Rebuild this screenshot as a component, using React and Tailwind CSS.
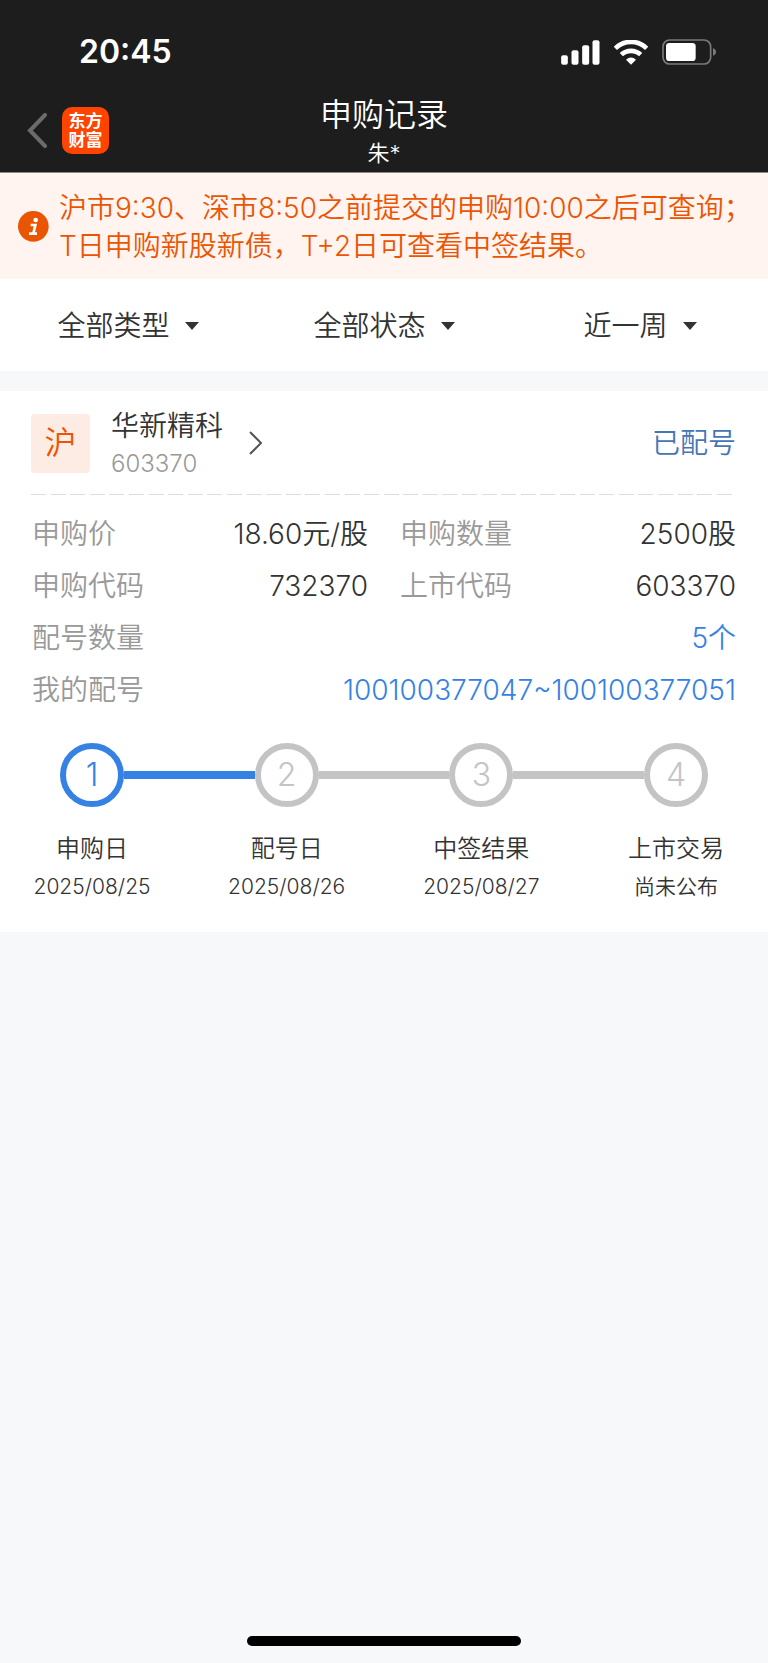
import React from "react";

const filters = [
  { id: "type", label: "类型", options: ["全部类型", "新股申购", "新债申购"] },
  { id: "status", label: "状态", options: ["全部状态", "尚未配号", "已经中签"] },
  { id: "period", label: "时间", options: ["近一周", "近一月", "近三月"] },
];

const details = [
  { label: "申购价", value: "18.60元/股" },
  { label: "申购数量", value: "2500股" },
  { label: "申购代码", value: "732370" },
  { label: "上市代码", value: "603370" },
  { label: "配号数量", value: "5个", wide: true },
  { label: "我的配号", value: "100100377047~100100377051", wide: true },
];

const steps = [
  { title: "申购日", date: "2025/08/25", done: true },
  { title: "配号日", date: "2025/08/26" },
  { title: "中签结果", date: "2025/08/27" },
  { title: "上市交易", date: "尚未公布" },
];

function SignalIcon() {
  return (
    <svg className="h-[25px] w-[39px]" viewBox="0 0 116 75" fill="#fff" aria-hidden="true">
      <rect x="0" y="46" width="20" height="28" rx="6" />
      <rect x="31" y="31" width="21" height="43" rx="6" />
      <rect x="63" y="16" width="21" height="58" rx="6" />
      <rect x="94" y="1" width="21" height="73" rx="6" />
    </svg>
  );
}

function WifiIcon() {
  return (
    <svg className="h-[25px] w-[34px]" viewBox="0 0 102 75" fill="none" aria-hidden="true">
      <path d="M4 25 A67 67 0 0 1 98 25" stroke="#fff" strokeWidth="14" />
      <path d="M22 44 A42 42 0 0 1 80 44" stroke="#fff" strokeWidth="14" />
      <path d="M51 74 L36 59 Q51 46 66 59 Z" fill="#fff" />
    </svg>
  );
}

function BatteryIcon() {
  return (
    <svg className="h-[26px] w-[54px]" viewBox="0 0 162 78" fill="none" aria-hidden="true">
      <rect x="3" y="3" width="143" height="72" rx="20" stroke="#7a7a7a" strokeWidth="5" />
      <rect x="12" y="12" width="89" height="54" rx="10" fill="#fff" />
      <path d="M153 28 Q162 31 162 39 Q162 47 153 50 Z" fill="#7a7a7a" />
    </svg>
  );
}

function InfoIcon() {
  return (
    <svg className="h-[31px] w-[31px] shrink-0" viewBox="0 0 93 93" aria-hidden="true">
      <circle cx="46" cy="46" r="46" fill="#ea5504" />
      <circle cx="53" cy="27" r="7" fill="#fff" />
      <path d="M38 42 H52 L46 68 M33 68 H57" fill="none" stroke="#fff" strokeWidth="8" />
    </svg>
  );
}

function Header() {
  return (
    <header className="border-b border-[#8a8a8a] bg-[#1d1d1d] text-white">
      <div className="flex h-[72px] items-end justify-between pr-[52px] pl-[79px]">
        <span className="text-[32px] leading-10 font-semibold">20:45</span>
        <div className="flex h-10 items-center gap-[14px]">
          <SignalIcon />
          <WifiIcon />
          <BatteryIcon />
        </div>
      </div>
      <div className="grid h-[100px] grid-cols-3">
        <div className="flex items-end gap-[15px] pb-[18px] pl-[27px]">
          <button type="button" aria-label="返回" className="flex h-[47px] items-center">
            <svg className="h-[35px] w-5" viewBox="0 0 20 35" fill="none">
              <path d="M18 2 L3 17.5 L18 33" stroke="#6b6b6b" strokeWidth="4" strokeLinecap="round" />
            </svg>
          </button>
          <a
            href="#home"
            className="flex h-[47px] w-[47px] flex-col items-center justify-center rounded-[10px] bg-[#ff4400] text-[17px] leading-[19px] font-bold"
          >
            <span>东方</span>
            <span>财富</span>
          </a>
        </div>
        <div className="flex flex-col items-center justify-end pb-[3px]">
          <h1 className="text-[32px] leading-[45px]">申购记录</h1>
          <p className="text-[22px] leading-8">朱*</p>
        </div>
      </div>
    </header>
  );
}

function Notice() {
  return (
    <section className="flex items-center gap-[10px] bg-[#fff4ef] pt-[15px] pb-[14px] pl-[18px] text-[#ea5504]">
      <InfoIcon />
      <p className="pt-px text-[28px] leading-[38px]">
        沪市9:30、深市8:50之前提交的申购10:00之后可查询；
        <br />
        T日申购新股新债，T+2日可查看中签结果。
      </p>
    </section>
  );
}

function Filters() {
  return (
    <form className="grid h-[92px] grid-cols-3 bg-white pt-0.5">
      {filters.map((filter) => (
        <label key={filter.id} htmlFor={filter.id} className="flex items-center justify-center gap-[14px]">
          <select
            id={filter.id}
            aria-label={filter.label}
            className="appearance-none bg-transparent text-[28px] leading-10 text-[#333]"
          >
            {filter.options.map((option) => (
              <option key={option}>{option}</option>
            ))}
          </select>
          <svg className="h-2 w-[14px]" viewBox="0 0 14 8" fill="#333" aria-hidden="true">
            <path d="M0 0 H14 L7 8 Z" />
          </svg>
        </label>
      ))}
    </form>
  );
}

function Stepper() {
  return (
    <div className="pt-[27px]">
      <div className="flex items-center px-[60px]">
        {steps.map((step, index) => (
          <React.Fragment key={step.title}>
            {index > 0 && (
              <div className={steps[index - 1].done ? "h-2 flex-1 bg-[#3582e4]" : "h-2 flex-1 bg-[#c4c4c4]"} />
            )}
            <div
              className={
                step.done
                  ? "flex h-16 w-16 items-center justify-center rounded-full border-[6px] border-[#3582e4] text-[32px] font-light text-[#3582e4]"
                  : "flex h-16 w-16 items-center justify-center rounded-full border-[6px] border-[#c4c4c4] text-[32px] font-light text-[#c4c4c4]"
              }
            >
              {index + 1}
            </div>
          </React.Fragment>
        ))}
      </div>
      <ol className="flex justify-between px-7 pt-6 text-center text-[#333]">
        {steps.map((step) => (
          <li key={step.title} className="w-32">
            <p className="text-[24px] leading-9">{step.title}</p>
            <p className="text-[21px] leading-10">{step.date}</p>
          </li>
        ))}
      </ol>
    </div>
  );
}

function RecordCard() {
  return (
    <article className="bg-white pb-[25px]">
      <div className="flex items-center pt-[14px] pr-8 pl-[31px]">
        <span className="flex h-[59px] w-[59px] items-center justify-center rounded bg-[#fdece4] text-[32px] text-[#ea5504]">
          沪
        </span>
        <a href="#detail" className="flex items-center gap-[26px] pl-[21px]">
          <span className="flex flex-col">
            <span className="text-[28px] leading-[42px] text-[#333]">华新精科</span>
            <span className="text-[24px] leading-[34px] text-[#999]">603370</span>
          </span>
          <svg className="h-6 w-[14px]" viewBox="0 0 14 24" fill="none" aria-hidden="true">
            <path d="M1 1 L12 12 L1 23" stroke="#555" strokeWidth="2" />
          </svg>
        </a>
        <span className="ml-auto text-[28px] text-[#4675b5]">已配号</span>
      </div>
      <div className="mt-[13px] mr-9 ml-[31px] flex justify-between">
        {Array.from({ length: 36 }, (_, index) => (
          <span key={index} className="h-px w-[15px] bg-[#dcdcdc]" />
        ))}
      </div>
      <dl className="grid grid-cols-2 gap-x-8 px-8 pt-[13px] text-[28px] leading-[52px]">
        {details.map((item) => (
          <div key={item.label} className={item.wide ? "col-span-2 flex justify-between" : "flex justify-between"}>
            <dt className="text-[#999]">{item.label}</dt>
            <dd className={item.wide ? "text-[#3582e4]" : "text-[#333]"}>{item.value}</dd>
          </div>
        ))}
      </dl>
      <Stepper />
    </article>
  );
}

export default function App() {
  return (
    <div className="flex min-h-screen flex-col bg-[#f7f8fa] font-['Inter','Noto_Sans_CJK_SC',sans-serif] font-[350]">
      <Header />
      <Notice />
      <main>
        <Filters />
        <div className="h-5" />
        <RecordCard />
      </main>
      <footer className="mt-auto flex justify-center pb-[17px]">
        <div className="h-[10px] w-[274px] rounded-full bg-black" />
      </footer>
    </div>
  );
}
